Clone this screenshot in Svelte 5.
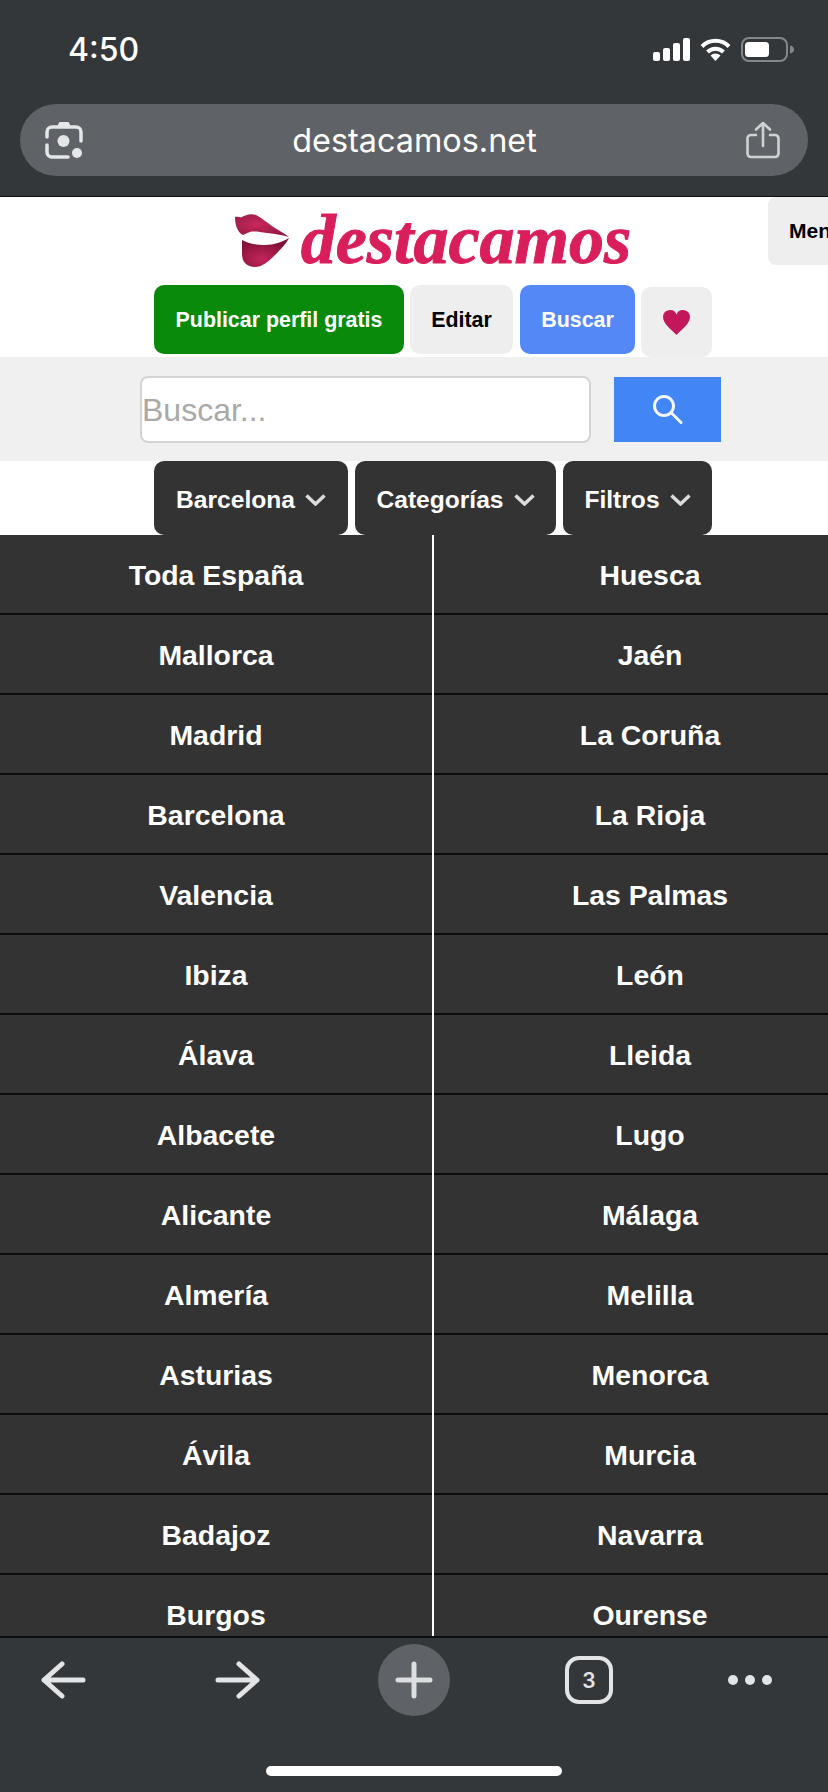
<script>
  const left = ['Toda España', 'Mallorca', 'Madrid', 'Barcelona', 'Valencia', 'Ibiza', 'Álava', 'Albacete', 'Alicante', 'Almería', 'Asturias', 'Ávila', 'Badajoz', 'Burgos'];
  const right = ['Huesca', 'Jaén', 'La Coruña', 'La Rioja', 'Las Palmas', 'León', 'Lleida', 'Lugo', 'Málaga', 'Melilla', 'Menorca', 'Murcia', 'Navarra', 'Ourense'];
  const menus = [
    { label: 'Barcelona', width: 194 },
    { label: 'Categorías', width: 201 },
    { label: 'Filtros', width: 149 }
  ];
</script>

<div class="phone">
  <header class="browser-top">
    <div class="status">
      <span class="time">4:50</span>
      <div class="status-icons">
        <svg width="37" height="23" viewBox="0 0 37 23" fill="#fff">
          <rect x="0" y="14" width="7" height="9" rx="2" />
          <rect x="10" y="10" width="7" height="13" rx="2" />
          <rect x="20" y="5" width="7" height="18" rx="2" />
          <rect x="30" y="0" width="7" height="23" rx="2" />
        </svg>
        <svg width="31" height="23" viewBox="0 0 31 23" fill="none" stroke="#fff" stroke-width="4">
          <path d="M2 8.500a19 19 0 0 1 27 0" />
          <path d="M7.500 14a11.500 11.500 0 0 1 16 0" />
          <path d="M15.500 23l-5-5.500a7 7 0 0 1 10 0z" fill="#fff" stroke="none" />
        </svg>
        <svg width="54" height="25" viewBox="0 0 54 25">
          <rect x="1" y="1" width="45" height="23" rx="7" fill="none" stroke="#85888a" stroke-width="2" />
          <rect x="4" y="5" width="24" height="15" rx="3.500" fill="#fff" />
          <path d="M49 8.500c2.500.6 4 2 4 4s-1.500 3.400-4 4z" fill="#85888a" />
        </svg>
      </div>
    </div>
    <div class="url-bar">
      <svg width="38" height="38" viewBox="0 0 38 38" fill="none" stroke="#e4e6e8" stroke-width="3.500" stroke-linecap="round">
        <path d="M13 6l2-4h8l2 4" fill="#e4e6e8" stroke-width="2" />
        <path d="M2 16V11a5 5 0 0 1 5-5h24a5 5 0 0 1 5 5v9" />
        <path d="M2 24v7a5 5 0 0 0 5 5h16" />
        <circle cx="18.500" cy="20" r="6" fill="#e4e6e8" stroke="none" />
        <circle cx="32" cy="32" r="5" fill="#e4e6e8" stroke="none" />
      </svg>
      <span class="url">destacamos.net</span>
      <svg width="34" height="38" viewBox="0 0 34 38" fill="none" stroke="#cfd2d4" stroke-width="2.600" stroke-linecap="round" stroke-linejoin="round">
        <path d="M17 25V2M10 8.500L17 2l7 6.500" />
        <path d="M10 14H5a3.500 3.500 0 0 0-3.500 3.500v15A3.500 3.500 0 0 0 5 36h24a3.500 3.500 0 0 0 3.500-3.500v-15A3.500 3.500 0 0 0 29 14h-5" />
      </svg>
    </div>
  </header>

  <div class="viewport">
    <main class="page">
      <button class="menu-btn">Menu</button>

      <div class="logo">
        <svg width="54" height="53" viewBox="0 0 54 53">
          <defs>
            <radialGradient id="lip-top" cx="0.4" cy="0.45" r="0.65">
              <stop offset="0" stop-color="#c9285c" />
              <stop offset="1" stop-color="#8f1a42" />
            </radialGradient>
            <radialGradient id="lip-bottom" cx="0.42" cy="0.72" r="0.65">
              <stop offset="0" stop-color="#c4245a" />
              <stop offset="1" stop-color="#7f1238" />
            </radialGradient>
          </defs>
          <path d="M0 3C3 2 5 4 7 3c3-2 9-4 14-2 6 3 13 9 19 13 5 3 10 6 14 9-6-2-13-3-22-4-7-1-13-2-17-1-3 1-5 2-7 3C2 18 0 10 0 3z" fill="url(#lip-top)" />
          <path d="M7 26c6 3 13 5 23 5 9 0 17-3 24-7-3 6-8 11-15 18-6 6-12 11-19 11-8 0-13-5-13-13z" fill="url(#lip-bottom)" />
        </svg>
        <span class="logo-text">destacamos</span>
      </div>

      <div class="actions">
        <button class="btn publish">Publicar perfil gratis</button>
        <button class="btn edit">Editar</button>
        <button class="btn search-link">Buscar</button>
        <button class="btn fav" aria-label="Favoritos">
          <svg width="27" height="25" viewBox="0 0 27 25" fill="#c2185b">
            <path d="M13.500 25C9 20 0 14 0 7a7 7 0 0 1 13.500-2.500A7 7 0 0 1 27 7c0 7-9 13-13.500 18z" />
          </svg>
        </button>
      </div>

      <div class="search-band">
        <input class="search-input" placeholder="Buscar..." />
        <button class="search-btn" aria-label="Buscar">
          <svg width="31" height="30" viewBox="0 0 31 30" fill="none" stroke="#f2f6ff" stroke-width="3" stroke-linecap="round">
            <circle cx="12" cy="12" r="9.500" />
            <path d="M19.500 19L29 28.500" />
          </svg>
        </button>
      </div>

      <div class="menus">
        {#each menus as menu}
          <button class="menu" style="width: {menu.width}px">
            {menu.label}
            <svg width="21" height="12" viewBox="0 0 21 12" fill="none" stroke="#dcdcdc" stroke-width="3.500">
              <path d="M1.500 1.500l9 8.500 9-8.500" />
            </svg>
          </button>
        {/each}
      </div>

      <div class="list">
        <ul>
          {#each left as name}
            <li>{name}</li>
          {/each}
        </ul>
        <ul class="second">
          {#each right as name}
            <li>{name}</li>
          {/each}
        </ul>
      </div>
    </main>
  </div>

  <footer class="browser-bottom">
    <div class="toolbar">
      <svg width="46" height="38" viewBox="0 0 46 38" fill="none" stroke="#e2e4e6" stroke-width="5" stroke-linecap="round" stroke-linejoin="round">
        <path d="M43 19H4M22 3L4 19l18 16" />
      </svg>
      <svg class="forward" width="46" height="38" viewBox="0 0 46 38" fill="none" stroke="#e2e4e6" stroke-width="5" stroke-linecap="round" stroke-linejoin="round">
        <path d="M3 19h39M24 3l18 16-18 16" />
      </svg>
      <div class="plus">
        <svg width="38" height="38" viewBox="0 0 38 38" fill="none" stroke="#dcdee0" stroke-width="5" stroke-linecap="round">
          <path d="M19 3v32M3 19h32" />
        </svg>
      </div>
      <div class="tabs">3</div>
      <svg class="more" width="46" height="12" viewBox="0 0 46 12" fill="#e2e4e6">
        <circle cx="6" cy="6" r="5" />
        <circle cx="23" cy="6" r="5" />
        <circle cx="40" cy="6" r="5" />
      </svg>
    </div>
    <div class="home-bar"></div>
  </footer>
</div>

<style>
  :global(body) {
    margin: 0;
    background: #33373a;
  }

  .phone {
    width: 828px;
    height: 1792px;
    display: flex;
    flex-direction: column;
    overflow: hidden;
    font-family: "Liberation Sans", Arial, sans-serif;
  }

  .browser-top {
    height: 196px;
    flex: none;
    background: #33373a;
    border-bottom: 1px solid #0c0d0e;
  }

  .status {
    height: 104px;
    box-sizing: border-box;
    padding: 36px 33px 0 68px;
    display: flex;
    justify-content: space-between;
    align-items: flex-start;
    color: #fff;
  }

  .time {
    font-family: Inter, sans-serif;
    font-size: 32px;
    font-weight: 500;
    line-height: 28px;
  }

  .status-icons {
    display: flex;
    align-items: center;
    gap: 10px;
    margin-top: 1px;
  }

  .url-bar {
    height: 72px;
    margin: 0 20px;
    padding: 0 28px 0 25px;
    border-radius: 36px;
    background: #5f6367;
    display: flex;
    align-items: center;
    justify-content: space-between;
  }

  .url {
    font-family: Inter, sans-serif;
    font-size: 32.4px;
    color: #fff;
  }

  .viewport {
    flex: 1;
    min-height: 0;
    overflow: hidden;
    background: #fff;
  }

  .page {
    width: 866px;
    position: relative;
  }

  .menu-btn {
    position: absolute;
    top: 0;
    left: 768px;
    width: 98px;
    height: 68px;
    padding: 0 0 0 21px;
    text-align: left;
    border: none;
    border-radius: 8px 0 0 8px;
    background: #eee;
    color: #000;
    font: bold 21px "Liberation Sans", Arial, sans-serif;
  }

  .logo {
    height: 88px;
    box-sizing: border-box;
    padding-top: 17px;
    display: flex;
    justify-content: center;
    align-items: flex-start;
    gap: 12px;
  }

  .logo-text {
    font-family: "Liberation Serif", serif;
    font-style: italic;
    font-weight: bold;
    font-size: 70px;
    line-height: 52px;
    color: #d91f5b;
    -webkit-text-stroke: 1px #d91f5b;
  }

  .actions {
    height: 72px;
    display: flex;
    justify-content: center;
    align-items: flex-start;
    gap: 6px;
  }

  .btn {
    height: 69px;
    border: none;
    border-radius: 10px;
    font: bold 21.4px "Liberation Sans", Arial, sans-serif;
    padding: 1px 0 0;
  }

  .publish {
    width: 250px;
    background: #0a8a0a;
    color: #fff;
  }

  .edit {
    width: 103px;
    background: #eee;
    color: #000;
  }

  .search-link {
    width: 115px;
    margin-left: 1px;
    background: #5488f7;
    color: #fff;
  }

  .fav {
    width: 71px;
    height: 70px;
    margin-top: 2px;
    background: #eee;
    display: flex;
    align-items: center;
    justify-content: center;
  }

  .search-band {
    height: 104px;
    background: #f0f0f0;
    display: flex;
    justify-content: center;
    align-items: center;
    gap: 23px;
    padding-right: 5px;
    box-sizing: border-box;
  }

  .search-input {
    width: 451px;
    height: 67px;
    box-sizing: border-box;
    padding: 2px 0 0;
    border: 2px solid #d4d4d4;
    border-radius: 8px;
    background: #fff;
    font: 32px "Liberation Sans", Arial, sans-serif;
    outline: none;
  }

  .search-input::placeholder {
    color: #a9a9a9;
    opacity: 1;
  }

  .search-btn {
    width: 107px;
    height: 65px;
    padding: 0;
    border: none;
    background: #4285f4;
    display: flex;
    align-items: center;
    justify-content: center;
  }

  .menus {
    height: 74px;
    display: flex;
    justify-content: center;
    gap: 7px;
  }

  .menu {
    height: 74px;
    padding: 3px 0 0;
    border: none;
    border-radius: 10px;
    background: #333;
    color: #fff;
    font: bold 24.6px "Liberation Sans", Arial, sans-serif;
    display: flex;
    align-items: center;
    justify-content: center;
    gap: 10px;
  }

  .list {
    display: grid;
    grid-template-columns: 432px 434px;
  }

  ul {
    margin: 0;
    padding: 0;
    list-style: none;
  }

  .second {
    border-left: 2px solid #fff;
  }

  li {
    height: 80px;
    box-sizing: border-box;
    background: #333;
    border-bottom: 2px solid #0a0a0a;
    color: #fff;
    font-size: 28.4px;
    font-weight: bold;
    text-align: center;
    line-height: 80px;
  }

  .browser-bottom {
    height: 156px;
    flex: none;
    box-sizing: border-box;
    background: #33373a;
    border-top: 2px solid #0c0d0e;
  }

  .toolbar {
    height: 84px;
    padding: 0 0 0 40px;
    display: flex;
    align-items: center;
    gap: 115px;
    box-sizing: border-box;
  }

  .forward {
    margin-left: 14px;
  }

  .plus {
    width: 72px;
    height: 72px;
    margin-left: 2px;
    border-radius: 50%;
    background: #5f6367;
    display: flex;
    align-items: center;
    justify-content: center;
  }

  .tabs {
    width: 48px;
    height: 48px;
    box-sizing: border-box;
    border: 4.500px solid #e2e4e6;
    border-radius: 14px;
    color: #e2e4e6;
    font: 600 21px Inter, sans-serif;
    display: flex;
    align-items: center;
    justify-content: center;
  }

  .more {
    margin-left: -1px;
  }

  .home-bar {
    width: 296px;
    height: 10px;
    margin: 44px auto 0;
    border-radius: 5px;
    background: #fff;
  }
</style>
